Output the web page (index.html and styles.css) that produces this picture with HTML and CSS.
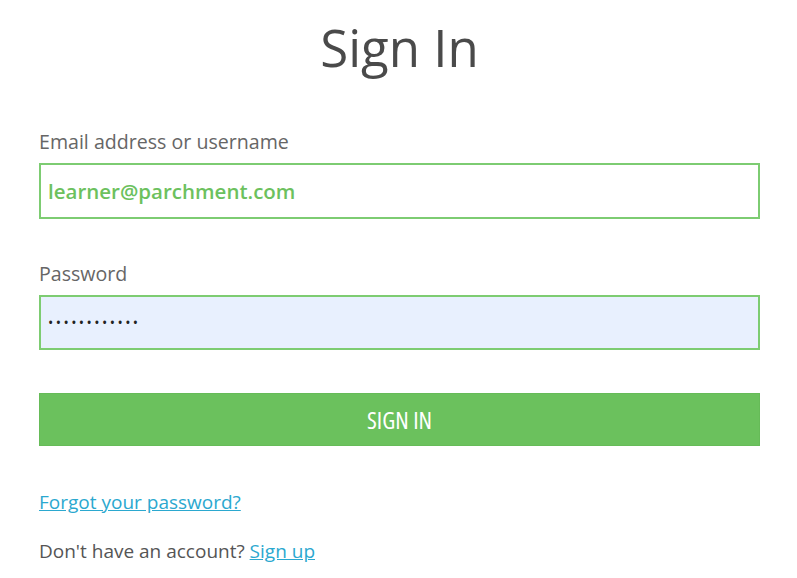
FILE: index.html
```html
<!DOCTYPE html>
<html>
<head>
<meta charset="utf-8">
<link rel="stylesheet" href="styles.css">
</head>
<body>
<main class="page">
  <h1 class="title">Sign In</h1>
  <form class="form">
    <label class="field">
      <span class="label">Email address or username</span>
      <span class="input input-email">learner@parchment.com</span>
    </label>
    <label class="field">
      <span class="label">Password</span>
      <span class="input input-pass">••••••••••••</span>
    </label>
    <button type="button" class="btn">SIGN IN</button>
  </form>
  <p class="forgot"><a href="#">Forgot your password?</a></p>
  <p class="signup">Don't have an account? <a href="#">Sign up</a></p>
</main>
</body>
</html>
```
FILE: styles.css
```css
* { box-sizing: border-box; }
html, body { margin: 0; padding: 0; background: #fff; }
body { font-family: "Open Sans", "Noto Sans", sans-serif; color: #555; }
.page { padding: 0 37px 0 39px; }
.title {
  margin: 0;
  padding-top: 12px;
  text-align: center;
  font-size: 51px;
  font-weight: 400;
  line-height: 70px;
  color: #4a4a4a;
}
.form { display: flex; flex-direction: column; margin-top: 47px; }
.field { display: flex; flex-direction: column; margin-bottom: 42px; }
.field:last-of-type { margin-bottom: 0; }
.label { font-size: 19.6px; line-height: 26px; color: #666; margin-bottom: 8px; }
.input {
  display: flex; align-items: center;
  height: 56px;
  border: 2px solid #7dcc72;
  padding: 0 7px;
  font-size: 20.5px;
}
.input-email { color: #6cc15e; font-weight: 600; }
.input-pass { background: #e8f0fe; color: #222; font-size: 14px; letter-spacing: 2.45px; height: 55px; }
.btn {
  margin-top: 43px;
  height: 53px;
  border: 1px solid #66bb58;
  background: #6bc15d;
  color: #fff;
  font-family: inherit;
  font-size: 24px;
  font-stretch: condensed;
  padding: 0;
}
.forgot { margin: 43px 0 0; font-size: 19px; line-height: 26px; }
.signup { margin: 23px 0 0; font-size: 19px; line-height: 26px; color: #555; }
a { color: #2ba8cf; text-decoration: underline; }
```
